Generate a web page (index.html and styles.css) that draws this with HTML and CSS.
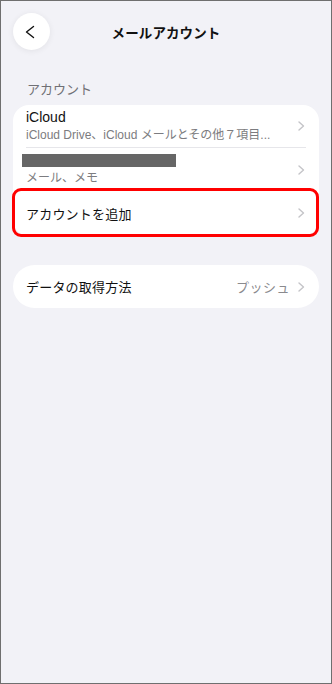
FILE: index.html
```html
<!DOCTYPE html>
<html lang="ja">
<head>
<meta charset="utf-8">
<title>メールアカウント</title>
<link rel="stylesheet" href="styles.css">
</head>
<body>
<div class="screen">
  <header class="nav">
    <div class="nav-left">
      <div class="back">
        <svg width="37" height="37" viewBox="0 0 37 37"><path d="M20.5 13.5 L13.5 19 L20.5 24.5" fill="none" stroke="#111" stroke-width="1.4" stroke-linecap="round" stroke-linejoin="round"/></svg>
      </div>
    </div>
    <div class="nav-title">メールアカウント</div>
    <div class="nav-right"></div>
  </header>

  <div class="section-label">アカウント</div>

  <div class="card">
    <div class="row row-sub">
      <div class="row-text">
        <div class="title">iCloud</div>
        <div class="sub">iCloud Drive、iCloud メールとその他７項目...</div>
      </div>
      <svg class="chev" width="7" height="10" viewBox="0 0 7 10"><path d="M1 1 L5.5 5 L1 9" fill="none" stroke="#c4c4c8" stroke-width="1.4" stroke-linecap="round" stroke-linejoin="round"/></svg>
    </div>
    <div class="sep"></div>
    <div class="row row-sub row-second">
      <div class="row-text">
        <div class="redact"></div>
        <div class="sub">メール、メモ</div>
      </div>
      <svg class="chev" width="7" height="10" viewBox="0 0 7 10"><path d="M1 1 L5.5 5 L1 9" fill="none" stroke="#c4c4c8" stroke-width="1.4" stroke-linecap="round" stroke-linejoin="round"/></svg>
    </div>
    <div class="row row-add">
      <div class="label">アカウントを追加</div>
      <svg class="chev" width="7" height="10" viewBox="0 0 7 10"><path d="M1 1 L5.5 5 L1 9" fill="none" stroke="#c4c4c8" stroke-width="1.4" stroke-linecap="round" stroke-linejoin="round"/></svg>
      <div class="highlight"></div>
    </div>
  </div>

  <div class="card card-pill">
    <div class="row row-fetch">
      <div class="label">データの取得方法</div>
      <div class="value">プッシュ</div>
      <svg class="chev" width="7" height="10" viewBox="0 0 7 10"><path d="M1 1 L5.5 5 L1 9" fill="none" stroke="#c4c4c8" stroke-width="1.4" stroke-linecap="round" stroke-linejoin="round"/></svg>
    </div>
  </div>
</div>
</body>
</html>
```

FILE: styles.css
```css
* { box-sizing: border-box; }
html, body { margin: 0; padding: 0; }
body {
  font-family: "Liberation Sans", "Noto Sans CJK JP", sans-serif;
  color: #111;
}
.screen {
  width: 332px;
  height: 684px;
  border: 1px solid #6f6f6f;
  background: #f2f2f7;
  display: flex;
  flex-direction: column;
  overflow: hidden;
}
.nav {
  display: grid;
  grid-template-columns: 1fr auto 1fr;
  align-items: center;
  padding: 12px 12px 0 12px;
  height: 49px;
}
.back {
  width: 37px;
  height: 37px;
  border-radius: 50%;
  background: #fff;
  box-shadow: 0 1px 6px rgba(0,0,0,0.07);
  display: flex;
}
.nav-title {
  font-size: 13.5px;
  font-weight: bold;
  letter-spacing: 0.1px;
}
.section-label {
  margin: 32px 0 0 26px;
  font-size: 13px;
  line-height: 16px;
  color: #707075;
  height: 16px;
}
.card {
  margin: 7px 12px 0 12px;
  background: #fff;
  border-radius: 16px;
}
.row {
  display: flex;
  align-items: center;
  padding: 0 14px 0 13px;
  position: relative;
}
.row-sub { height: 42px; }
.row-text { flex: 1; min-width: 0; }
.title {
  font-size: 14px;
  line-height: 17px;
  margin-bottom: 2px;
}
.sub {
  font-size: 12px;
  line-height: 15px;
  color: #7c7c80;
  white-space: nowrap;
}
.sep {
  height: 1px;
  background: #e6e6ea;
  margin: 0 13px 0 13px;
}
.row-second { height: 42px; padding-top: 2px; }
.redact {
  width: 154px;
  height: 13px;
  background: #666;
  margin: 0 0 4px -4px;
}
.chev { flex: none; margin-left: 8px; }
.row-add { height: 46px; }
.label {
  flex: 1;
  font-size: 13px;
  letter-spacing: 0.2px;
}
.highlight {
  position: absolute;
  left: -1px;
  right: 0;
  top: -2px;
  bottom: -1px;
  border: 3px solid #f00;
  border-radius: 9px;
  pointer-events: none;
}
.card-pill {
  margin-top: 29px;
  border-radius: 22px;
}
.row-fetch { height: 43px; }
.value {
  font-size: 13px;
  color: #8a8a8e;
  letter-spacing: 0.5px;
}
```
